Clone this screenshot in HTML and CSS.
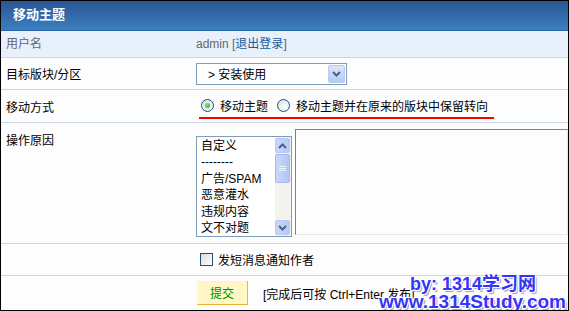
FILE: index.html
```html
<!DOCTYPE html>
<html lang="zh-CN">
<head>
  <meta charset="UTF-8">
  <title>移动主题</title>
  <link rel="stylesheet" href="styles.css">
</head>
<body>
  <div class="panel">
    <div class="panel-head">移动主题</div>

    <div class="row row-user">
      <div class="label gray">用户名</div>
      <div class="value gray">admin [<a href="#" class="link">退出登录</a>]</div>
    </div>

    <div class="row row-target">
      <div class="label">目标版块/分区</div>
      <div class="value">
        <div class="select">
          <span class="select-text">&gt; 安装使用</span>
          <span class="select-btn">
            <svg width="9" height="6" viewBox="0 0 9 6"><path d="M1 1 L4.5 4.5 L8 1" fill="none" stroke="#4d6185" stroke-width="2"/></svg>
          </span>
        </div>
      </div>
    </div>

    <div class="row row-mode">
      <div class="label">移动方式</div>
      <div class="value">
        <div class="radios">
          <label class="opt"><span class="radio checked"></span>移动主题</label>
          <label class="opt"><span class="radio"></span>移动主题并在原来的版块中保留转向</label>
        </div>
      </div>
    </div>

    <div class="row row-reason">
      <div class="label">操作原因</div>
      <div class="value reason">
        <div class="listbox">
          <ul class="items">
            <li>自定义</li>
            <li>--------</li>
            <li>广告/SPAM</li>
            <li>恶意灌水</li>
            <li>违规内容</li>
            <li>文不对题</li>
          </ul>
          <div class="scroll">
            <span class="sb-btn">
              <svg width="9" height="6" viewBox="0 0 9 6"><path d="M1 5 L4.5 1.5 L8 5" fill="none" stroke="#4d6185" stroke-width="2"/></svg>
            </span>
            <span class="sb-thumb">
              <svg width="7" height="6" viewBox="0 0 7 6"><path d="M0 0.5 H7 M0 2.5 H7 M0 4.5 H7" stroke="#eef3ff" stroke-width="1"/></svg>
            </span>
            <span class="sb-track"></span>
            <span class="sb-btn">
              <svg width="9" height="6" viewBox="0 0 9 6"><path d="M1 1 L4.5 4.5 L8 1" fill="none" stroke="#4d6185" stroke-width="2"/></svg>
            </span>
          </div>
        </div>
        <div class="textarea"></div>
      </div>
    </div>

    <div class="row row-notify">
      <div class="label"></div>
      <div class="value">
        <label class="opt"><span class="checkbox"></span>发短消息通知作者</label>
      </div>
    </div>

    <div class="row row-submit">
      <div class="label"></div>
      <div class="value">
        <button class="btn-submit">提交</button>
        <span class="hint">[完成后可按 Ctrl+Enter 发布]</span>
      </div>
    </div>

    <div class="watermark">
      <div class="wm-by">by: 1314学习网</div>
      <div class="wm-url">www.1314Study.com</div>
    </div>
  </div>
</body>
</html>
```

FILE: styles.css
```css
body {
  margin: 0;
  font-family: "Liberation Sans", "Noto Sans CJK SC", sans-serif;
  font-size: 12px;
  color: #000;
}
.panel {
  position: relative;
  width: 567px;
  height: 309px;
  border: 1px solid #000;
  background: #fdfdfd;
  overflow: hidden;
}
.panel-head {
  height: 29px;
  border-bottom: 1px solid #2a62a8;
  background: linear-gradient(#2c5594, #3b7fbf);
  color: #fff;
  font-weight: bold;
  font-size: 13px;
  line-height: 28px;
  padding-left: 12px;
}
.row {
  display: grid;
  grid-template-columns: 195px 1fr;
  border-bottom: 1px solid #c8d6e3;
}
.label {
  padding-left: 5px;
}
.gray {
  color: #666;
}
.link {
  color: #1a5a9a;
  text-decoration: none;
}
.row-user {
  height: 26px;
  line-height: 26px;
  background: #e8f1fb;
}
.row-target {
  height: 31px;
  align-items: center;
}
.row-mode {
  height: 32px;
  align-items: center;
}
.row-reason {
  height: 120px;
}
.row-reason .label {
  padding-top: 8px;
}
.row-notify {
  height: 31px;
  align-items: center;
}
.row-submit {
  height: 34px;
  align-items: center;
  border-bottom: none;
}

/* select */
.select {
  display: flex;
  align-items: center;
  justify-content: space-between;
  width: 149px;
  height: 20px;
  border: 1px solid #7f9db9;
  background: #fff;
}
.select-text {
  padding-left: 11px;
}
.select-btn {
  display: flex;
  align-items: center;
  justify-content: center;
  width: 15px;
  height: 16px;
  margin-right: 1px;
  border: 1px solid #b9c9ef;
  border-radius: 2px;
  background: linear-gradient(#dbe6fd, #b5c9f5);
}

/* radios */
.radios {
  display: inline-flex;
  gap: 9px;
  padding: 0 6px 3px 2px;
  margin: 3px 0 0 3px;
  border-bottom: 2px solid #f00;
}
.opt {
  display: inline-flex;
  align-items: center;
}
.radio {
  position: relative;
  width: 11px;
  height: 11px;
  margin-right: 6px;
  border: 1px solid #1c5180;
  border-radius: 50%;
  background: radial-gradient(circle at 65% 65%, #fff, #dcdcd4);
}
.radio.checked::after {
  content: "";
  position: absolute;
  left: 3px;
  top: 3px;
  width: 5px;
  height: 5px;
  border-radius: 50%;
  background: radial-gradient(circle at 40% 40%, #7fe67f, #21a121);
}
.checkbox {
  width: 11px;
  height: 11px;
  margin: 0 5px 0 4px;
  border: 1px solid #1c5180;
  background: linear-gradient(135deg, #dcdcd7, #fff);
}

/* reason */
.reason {
  display: flex;
  align-items: flex-start;
  gap: 3px;
}
.listbox {
  display: flex;
  width: 94px;
  height: 99px;
  margin-top: 13px;
  border: 1px solid #7f9db9;
  background: #fff;
}
.items {
  flex: 1;
  list-style: none;
  margin: 0;
  padding: 1px 0 0 4px;
  line-height: 16.4px;
  overflow: hidden;
}
.scroll {
  display: flex;
  flex-direction: column;
  width: 15px;
  padding: 1px 1px 1px 0;
  background: #f4f3ee;
}
.sb-btn {
  display: flex;
  align-items: center;
  justify-content: center;
  height: 15px;
  border: 1px solid #b9c9ef;
  border-radius: 2px;
  background: linear-gradient(90deg, #c9d8fb, #b5c9f5);
  box-sizing: border-box;
}
.sb-thumb {
  display: flex;
  align-items: center;
  justify-content: center;
  height: 29px;
  margin-top: 1px;
  border: 1px solid #a5b9ea;
  border-radius: 2px;
  background: linear-gradient(90deg, #c9d8fb, #b2c6f3);
  box-sizing: border-box;
}
.sb-track {
  flex: 1;
}
.textarea {
  flex: 1;
  height: 104px;
  margin-top: 6px;
  border: 1px solid #e6e6e6;
  border-top-color: #808080;
  border-left-color: #808080;
  background: #fdfdfd;
}

/* submit */
.value:has(.btn-submit) {
  display: flex;
  align-items: center;
}
.btn-submit {
  width: 51px;
  height: 24px;
  margin-left: 1px;
  padding: 0;
  border: none;
  border-right: 1px solid #f2b33d;
  border-bottom: 1px solid #f2b33d;
  background: #fff8c4;
  color: #009000;
  font-family: "Liberation Sans", "Noto Sans CJK SC", sans-serif;
  font-size: 12px;
}
.hint {
  margin-left: 15px;
}

/* watermark */
.watermark {
  position: absolute;
  right: 2px;
  bottom: -1px;
  color: #3535f5;
  font-weight: bold;
  font-size: 18px;
  line-height: 18px;
  text-align: right;
  text-shadow: 1px 1px 0 #fff, -1px -1px 0 #fff, 1px -1px 0 #fff, -1px 1px 0 #fff, 2px 2px 1px #9999cc;
}
.wm-by {
  margin-right: 30px;
}
.wm-url {
  font-size: 19px;
}
```
